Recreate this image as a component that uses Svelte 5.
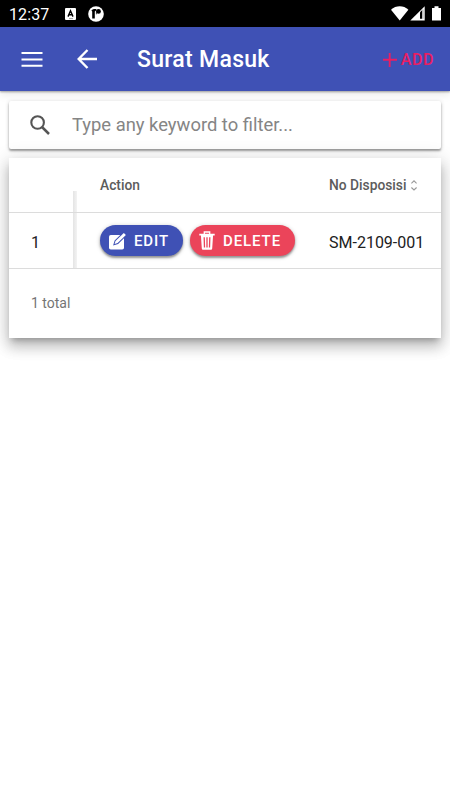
<script lang="ts">
	type Row = { index: number; disposisi: string };

	let rows: Row[] = $state([{ index: 1, disposisi: 'SM-2109-001' }]);
	let keyword = $state('');

	const filtered = $derived(
		rows.filter((row) => row.disposisi.toLowerCase().includes(keyword.toLowerCase()))
	);
</script>

<div class="screen">
	<div class="status-bar">
		<span class="clock">12:37</span>
		<svg class="status-app" width="11" height="12" viewBox="0 0 11 12">
			<rect width="11" height="12" rx="1" fill="#fff" />
			<path d="M3 8.6 5.5 2.8 8 8.6M3.8 6.8h3.4" fill="none" stroke="#000" stroke-width="1.4" />
			<path d="M4 10.6h4" stroke="#777" stroke-width=".7" />
		</svg>
		<svg class="status-round" width="16" height="16" viewBox="0 0 16 16">
			<circle cx="8" cy="8" r="7.8" fill="#fff" />
			<path d="M3.4 4.6Q4.5 3 6 3h2v1.6l-1.2.8v7.1H4.2V5.4Z" fill="#000" />
			<circle cx="10.5" cy="5.4" r="2.4" fill="#000" />
			<path d="M8.4 3.5v4.8" stroke="#000" stroke-width=".7" />
		</svg>
		<div class="status-right">
			<svg width="18" height="15" viewBox="0 0 18 15">
				<path d="M0 3.7C5-.9 12.5-.9 17.4 3.7L8.7 14.5Z" fill="#fff" />
			</svg>
			<svg class="signal" width="15" height="15" viewBox="0 0 15 15">
				<path d="M14.7.3v14.2H.3Z" fill="#fff" />
				<path d="M10 6.2 12 4.2v8.6h-2Z" fill="#000" />
				<path d="M12.9 3.5v9.3" stroke="#777" stroke-width=".8" />
			</svg>
			<svg class="battery" width="9" height="15" viewBox="0 0 9 15">
				<path d="M2.5.3h4V2H9v12.5H0V2h2.5Z" fill="#fff" />
			</svg>
		</div>
	</div>

	<header class="toolbar">
		<button aria-label="Menu">
			<svg width="22" height="16" viewBox="0 0 22 16">
				<path d="M.5 2h21M.5 8.5h21M.5 14.7h21" stroke="#fff" stroke-width="2.1" />
			</svg>
		</button>
		<button class="back" aria-label="Back">
			<svg width="21" height="20" viewBox="0 0 21 20">
				<path
					d="M10.5 1 1.7 10l8.8 9M1.7 10H20"
					fill="none"
					stroke="#fff"
					stroke-width="2.4"
				/>
			</svg>
		</button>
		<h1>Surat Masuk</h1>
		<button class="add">
			<svg width="14" height="14" viewBox="0 0 14 14">
				<path d="M6.7 0v14M0 6.7h14" stroke="currentColor" stroke-width="1.9" />
			</svg>
			<span>ADD</span>
		</button>
	</header>

	<main>
		<label class="search">
			<svg width="20" height="20" viewBox="0 0 20 20">
				<circle cx="7.6" cy="7.5" r="6.3" fill="none" stroke="#555" stroke-width="2.1" />
				<path d="m12 12 7 7" stroke="#555" stroke-width="2.5" />
			</svg>
			<input type="text" placeholder="Type any keyword to filter..." bind:value={keyword} />
		</label>

		<section class="card">
			<div class="row head">
				<div class="index"></div>
				<div class="action">Action</div>
				<div class="disposisi">
					No Disposisi
					<svg width="6" height="11" viewBox="0 0 6 11">
						<path
							d="M.4 3.3 3 .8l2.6 2.5M.4 7.5 3 10l2.6-2.5"
							fill="none"
							stroke="#999"
							stroke-width="1.1"
						/>
					</svg>
				</div>
			</div>
			{#each filtered as row (row.index)}
				<div class="row">
					<div class="index">{row.index}</div>
					<div class="action">
						<button class="pill edit">
							<svg width="19" height="18" viewBox="0 0 19 18">
								<rect x="1" y="3" width="15" height="14.5" rx="1.8" fill="#fff" />
								<path
									d="m6.6 12 .9-3L15.8.9l2.1 2-8.3 8.2Z"
									fill="#fff"
									stroke="#3f51b5"
									stroke-width="2"
								/>
								<path d="m6.6 12 .9-3L15.8.9l2.1 2-8.3 8.2Z" fill="#fff" />
							</svg>
							EDIT
						</button>
						<button class="pill delete">
							<svg width="16" height="19" viewBox="0 0 16 19">
								<path d="M5.3 3V1h5.4v2" fill="none" stroke="#fff" stroke-width="1.3" />
								<path
									d="M.3 2.8h15.4v1.6H.3ZM1.9 4h12.2l-.9 13.5q-.1 1.2-1.2 1.2H4q-1.1 0-1.2-1.2Z"
									fill="#fff"
								/>
								<path
									d="m5.2 6.2.3 10.3M8 6.2v10.3M10.8 6.2l-.3 10.3"
									stroke="#eb445a"
									stroke-width="1.3"
								/>
							</svg>
							DELETE
						</button>
					</div>
					<div class="disposisi">{row.disposisi}</div>
				</div>
			{/each}
			<footer>{filtered.length} total</footer>
		</section>
	</main>
</div>

<style>
	:global(body) {
		background: #fff;
	}

	.screen {
		width: 450px;
		height: 800px;
		overflow: hidden;
		font-family: Roboto, sans-serif;
		background: #fff;
	}

	svg {
		display: block;
		flex: none;
	}

	button {
		padding: 0;
		border: 0;
		background: none;
		font: inherit;
		color: inherit;
	}

	.status-bar {
		display: flex;
		align-items: center;
		height: 27px;
		padding: 0 9px;
		box-sizing: border-box;
		background: #000;
		color: #fff;
	}

	.clock {
		width: 56px;
		padding-top: 2px;
		font-size: 16px;
		line-height: 20px;
		letter-spacing: 0.1px;
	}

	.status-app {
		margin-top: 1px;
	}

	.status-round {
		margin: 1px 0 0 12px;
	}

	.status-right {
		display: flex;
		margin-left: auto;
	}

	.signal {
		margin-left: 1px;
	}

	.battery {
		margin-left: 7px;
	}

	.toolbar {
		display: flex;
		align-items: center;
		height: 64px;
		padding: 0 16px 0 21px;
		box-sizing: border-box;
		background: #3f51b5;
		color: #fff;
		box-shadow:
			0 1px 2px rgba(0, 0, 0, 0.35),
			0 3px 9px rgba(0, 0, 0, 0.1);
	}

	.back {
		margin-left: 34px;
	}

	h1 {
		margin: 0 0 0 39px;
		padding-top: 2px;
		font-size: 23px;
		font-weight: 500;
		line-height: 28px;
		letter-spacing: 0.3px;
		white-space: nowrap;
	}

	.add {
		display: flex;
		align-items: center;
		gap: 4px;
		margin-left: auto;
		padding-top: 1px;
		font-size: 16px;
		font-weight: 500;
		letter-spacing: 0.6px;
		color: #e91e63;
	}

	main {
		padding: 10px 9px 0;
	}

	.search {
		display: flex;
		align-items: center;
		height: 48px;
		padding-left: 21px;
		border-radius: 2px;
		background: #fff;
		box-shadow:
			0 2px 2px rgba(0, 0, 0, 0.3),
			0 1px 4px rgba(0, 0, 0, 0.2);
	}

	input {
		flex: 1;
		min-width: 0;
		margin-left: 22px;
		padding: 0;
		border: 0;
		outline: 0;
		background: none;
		font: 18.4px/24px Roboto, sans-serif;
	}

	input::placeholder {
		color: #858585;
		opacity: 1;
	}

	.card {
		height: 180px;
		margin-top: 9px;
		background: #fff;
		box-shadow:
			0 5px 6px -3px rgba(0, 0, 0, 0.25),
			0 9px 12px 1px rgba(0, 0, 0, 0.16),
			0 3px 18px 2px rgba(0, 0, 0, 0.14);
	}

	.row {
		display: grid;
		grid-template-columns: 91px 229px 1fr;
		align-items: center;
		height: 56px;
		box-sizing: border-box;
		border-bottom: 1px solid #dcdcdc;
		font-size: 16px;
		color: #212121;
	}

	.head {
		height: 55px;
		font-size: 13.8px;
		font-weight: 500;
		color: #5c5c5c;
	}

	.index {
		display: flex;
		align-items: center;
		align-self: end;
		width: 68px;
		height: 55px;
		padding: 3px 0 0 22px;
		box-sizing: border-box;
		background: linear-gradient(to right, transparent 64px, #e4e4e4 64px, #f3f3f3 68px);
	}

	.head .index {
		height: 21px;
	}

	.action,
	.disposisi {
		display: flex;
		align-items: center;
		white-space: nowrap;
	}

	.disposisi {
		padding-top: 3px;
	}

	.head .disposisi {
		gap: 4px;
		padding-top: 0;
	}

	.pill {
		display: flex;
		align-items: center;
		height: 31px;
		border-radius: 16px;
		font-size: 15px;
		font-weight: 500;
		letter-spacing: 0.9px;
		color: #fff;
		box-shadow:
			0 2px 2px rgba(0, 0, 0, 0.3),
			0 1px 4px rgba(0, 0, 0, 0.25);
	}

	.edit {
		gap: 7px;
		width: 83px;
		padding-left: 8px;
		background: #3f51b5;
	}

	.delete {
		gap: 8px;
		width: 105px;
		margin-left: 7px;
		padding-left: 9px;
		background: #eb445a;
	}

	footer {
		display: flex;
		align-items: center;
		height: 68px;
		padding-left: 22px;
		font-size: 14px;
		color: #757575;
	}
</style>
